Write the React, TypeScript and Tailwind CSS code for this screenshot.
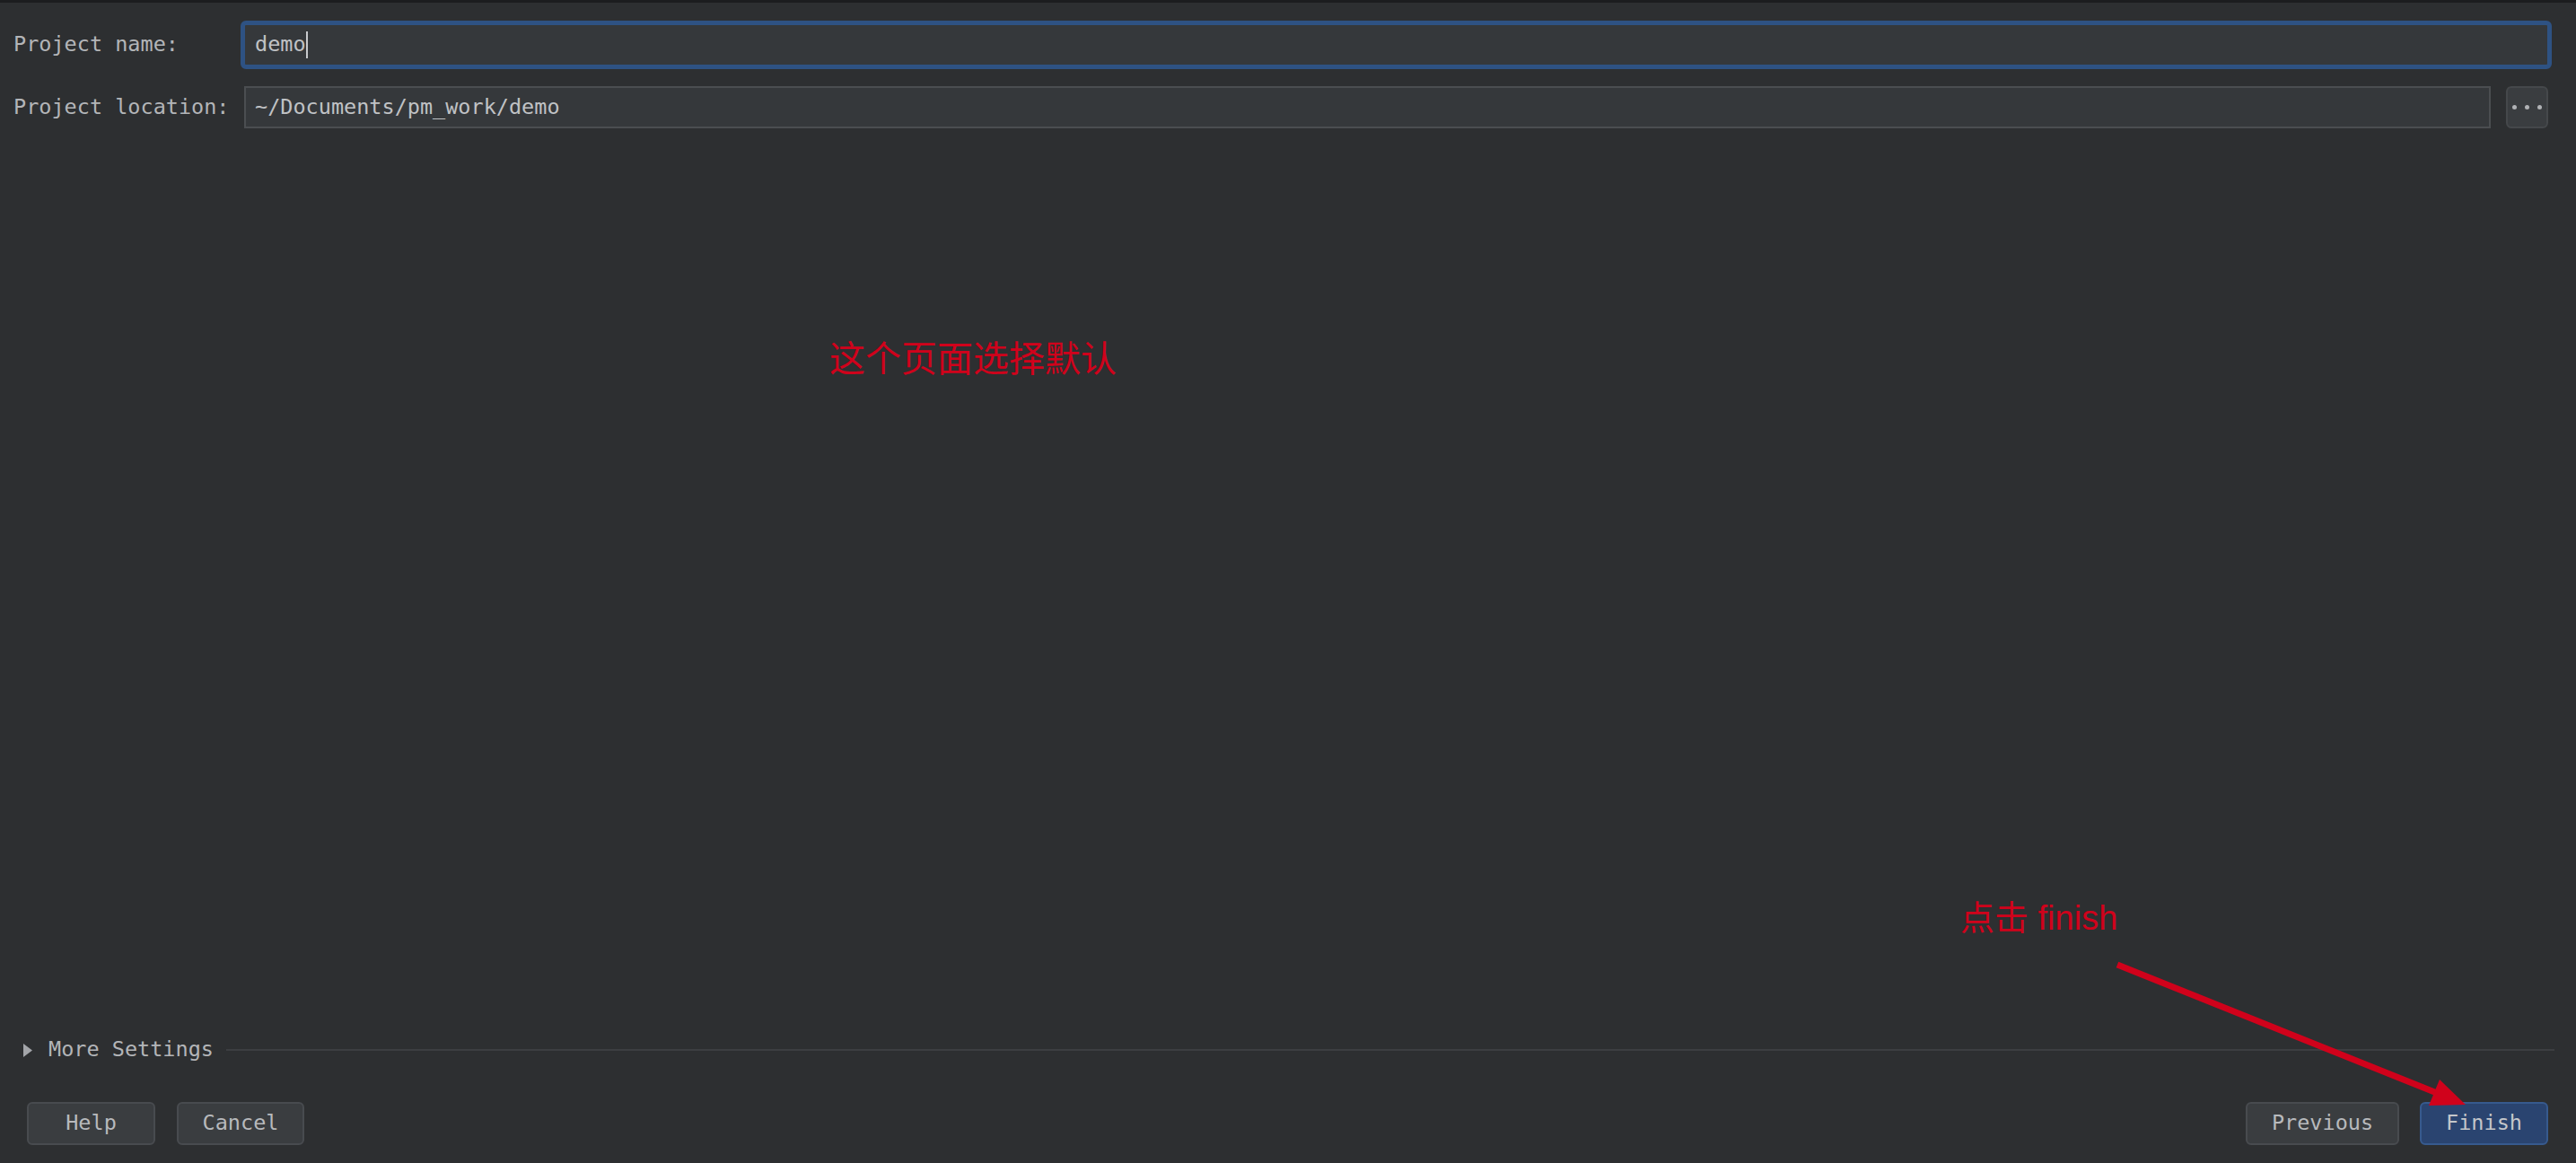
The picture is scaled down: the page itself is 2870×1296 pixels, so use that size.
import React from 'react';

const mono = "font-['DejaVu_Sans_Mono',monospace] text-[23.5px] leading-none";

const DialogButton: React.FC<{ label: string; width: string; primary?: boolean }> = ({ label, width, primary }) => (
  <button
    className={`${width} h-[48px] rounded-[6px] border-2 flex items-center justify-center ${mono} ${
      primary ? 'bg-[#2a4470] border-[#375a8e] text-[#c4c6ca]' : 'bg-[#3a3d40] border-[#484b4f] text-[#b7b9bc]'
    }`}
  >
    {label}
  </button>
);

export default function App() {
  return (
    <div className="relative w-[2870px] h-[1296px] bg-[#2d2f31] border-t-[3px] border-[#1c1d1f] flex flex-col overflow-hidden">
      {/* form */}
      <div className="pl-[15px] pr-[27px] pt-[20px] flex flex-col gap-[19px]">
        <div className="flex items-center h-[54px]">
          <label className={`w-[253px] shrink-0 text-[#b3b5b8] ${mono}`}>Project name:</label>
          <div className="flex-1 h-[54px] rounded-[6px] border-[5px] border-[#2e5283] bg-[#35383b] flex items-center pl-[11px]">
            <span className={`text-[#c0c2c5] ${mono}`}>demo</span>
            <span className="w-[2px] h-[30px] bg-[#c8cacd]" />
          </div>
        </div>
        <div className="flex items-center h-[47px] mr-[4px]">
          <label className={`w-[257px] shrink-0 text-[#b3b5b8] ${mono}`}>Project location:</label>
          <div className="flex-1 h-[47px] border-2 border-[#4b4e51] bg-[#35383b] flex items-center pl-[10px]">
            <span className={`text-[#c0c2c5] ${mono}`}>~/Documents/pm_work/demo</span>
          </div>
          <button className="ml-[17px] w-[47px] h-[47px] rounded-[6px] border-2 border-[#45484b] bg-[#3a3d40] flex items-center justify-center gap-[9px]">
            <span className="w-[5px] h-[5px] rounded-full bg-[#b0b2b5]" />
            <span className="w-[5px] h-[5px] rounded-full bg-[#b0b2b5]" />
            <span className="w-[5px] h-[5px] rounded-full bg-[#b0b2b5]" />
          </button>
        </div>
      </div>

      <div className="flex-1" />

      {/* more settings */}
      <div className="flex items-center h-[24px] pl-[26px] pr-[24px]">
        <svg width="10" height="15" viewBox="0 0 10 15" className="shrink-0">
          <path d="M0 0 L10 7.5 L0 15 Z" fill="#a3a5a9" />
        </svg>
        <span className={`ml-[18px] text-[#b3b5b8] ${mono}`}>More Settings</span>
        <div className="ml-[14px] flex-1 h-[2px] bg-[#3c3e41]" />
      </div>

      {/* buttons */}
      <div className="mt-[46px] mb-[20px] pl-[30px] pr-[31px] flex items-center">
        <div className="flex gap-[24px]">
          <DialogButton label="Help" width="w-[143px]" />
          <DialogButton label="Cancel" width="w-[142px]" />
        </div>
        <div className="flex-1" />
        <div className="flex gap-[23px]">
          <DialogButton label="Previous" width="w-[171px]" />
          <DialogButton label="Finish" width="w-[143px]" primary />
        </div>
      </div>

      {/* annotations */}
      <div className="absolute left-[924px] top-[377px] text-[#d0021b] text-[40px] leading-none font-['Liberation_Sans','Noto_Sans_CJK_SC',sans-serif]">
        这个页面选择默认
      </div>
      <div className="absolute left-[2184px] top-[1001px] text-[#d0021b] text-[38px] leading-none font-['Liberation_Sans','Noto_Sans_CJK_SC',sans-serif]">
        点击 finish
      </div>
      <svg className="absolute left-0 top-[-3px] pointer-events-none" width="2870" height="1296" viewBox="0 0 2870 1296">
        <line x1="2359" y1="1075" x2="2715" y2="1218" stroke="#d0021b" strokeWidth="7" />
        <polygon points="2718,1203 2706,1232 2747,1231" fill="#d0021b" />
      </svg>
    </div>
  );
}
